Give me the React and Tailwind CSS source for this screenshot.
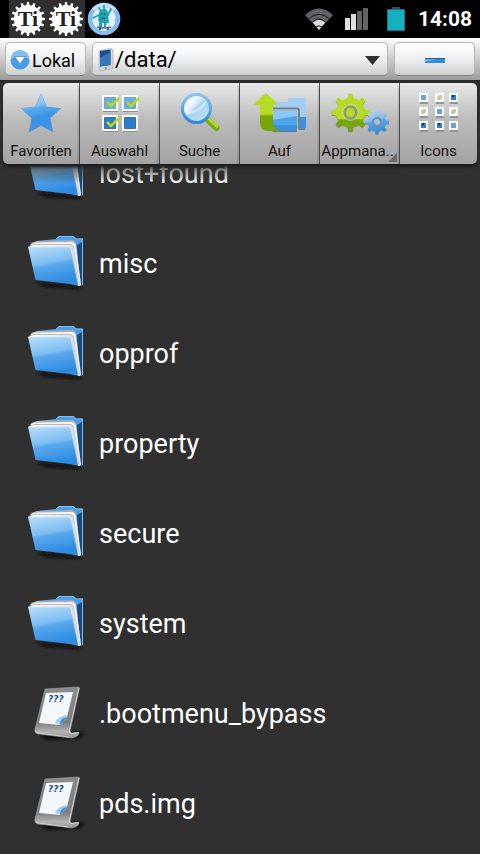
import React from 'react'

const folders = ['lost+found', 'misc', 'opprof', 'property', 'secure', 'system']
const files = ['.bootmenu_bypass', 'pds.img']

// closed outline of a gear, alternating between the root and tip radius
function gearPath(cx, cy, tip, root, teeth) {
  const step = (Math.PI * 2) / teeth
  const points = []
  for (let i = 0; i < teeth; i++) {
    const a = i * step - Math.PI / 2
    const at = (r, k) => `${(cx + r * Math.cos(a + k * step)).toFixed(2)} ${(cy + r * Math.sin(a + k * step)).toFixed(2)}`
    points.push(at(root, -0.4), at(root, -0.26), at(tip, -0.15), at(tip, 0.15), at(root, 0.26), at(root, 0.4))
  }
  return `M${points.join('L')}Z`
}

function Defs() {
  return (
    <svg className="absolute h-0 w-0" aria-hidden="true">
      <defs>
        <linearGradient id="blue" x1="0" y1="0" x2="0.25" y2="1">
          <stop offset="0" stopColor="#b9ddf9" />
          <stop offset="0.48" stopColor="#7dbdf3" />
          <stop offset="0.56" stopColor="#5aa8ec" />
          <stop offset="1" stopColor="#2e8be2" />
        </linearGradient>
        <linearGradient id="page" x1="0" y1="0" x2="1" y2="0">
          <stop offset="0" stopColor="#fff" />
          <stop offset="1" stopColor="#d8d8d8" />
        </linearGradient>
        <linearGradient id="metal" x1="0" y1="0" x2="0" y2="1">
          <stop offset="0" stopColor="#8c8c8c" />
          <stop offset="0.7" stopColor="#7f7f7f" />
          <stop offset="0.88" stopColor="#b4b4b4" />
          <stop offset="1" stopColor="#929292" />
        </linearGradient>
        <linearGradient id="lens" x1="0" y1="0" x2="1" y2="1">
          <stop offset="0" stopColor="#d9edfb" />
          <stop offset="0.35" stopColor="#f2f8fc" />
          <stop offset="0.5" stopColor="#a9d3f6" />
          <stop offset="1" stopColor="#c9e4fa" />
        </linearGradient>
        <linearGradient id="ring" x1="0" y1="0" x2="0" y2="1">
          <stop offset="0" stopColor="#8cc3f3" />
          <stop offset="1" stopColor="#2c86de" />
        </linearGradient>
        <linearGradient id="green" x1="0" y1="0" x2="0" y2="1">
          <stop offset="0.54" stopColor="#b5dc22" />
          <stop offset="0.62" stopColor="#76a50c" />
        </linearGradient>
        <linearGradient id="greenGear" x1="0" y1="0" x2="0" y2="1">
          <stop offset="0.66" stopColor="#b5dc22" />
          <stop offset="0.7" stopColor="#76a50c" />
        </linearGradient>
        <filter id="soft" x="-20%" y="-100%" width="140%" height="300%">
          <feGaussianBlur stdDeviation="1.6" />
        </filter>
      </defs>
    </svg>
  )
}

function TitaniumIcon() {
  return (
    <svg viewBox="0 0 38 38" className="h-[38px] w-[38px] bg-[#303030]">
      <path d={gearPath(19, 19, 17, 14, 16)} fill="#fff" />
      <text x="19" y="26" textAnchor="middle" fontSize="22" fontWeight="700" fontFamily="Liberation Serif, serif" fill="#222">Ti</text>
    </svg>
  )
}

function SkaterIcon() {
  return (
    <svg viewBox="0 0 34 34" className="ml-[2px] h-[34px] w-[34px]">
      <circle cx="17" cy="17" r="14" fill="#e4eef6" stroke="#86bdf0" strokeWidth="4.500" />
      <path d="M6.300 8A14 14 0 0 1 27.700 8" fill="none" stroke="#bfdff9" strokeWidth="4" />
      <path d="M29 16l4.500 1-2.500 4-4-3z" fill="#7fb9ec" />
      <path d="M12 11q1-4 5-4t4 5l1 9h-3v4h-2v-4h-2v4h-3v-6h-1z" fill="#1fa3ae" />
      <path d="M12 13l-6 3M21 13l3-6M12 6l2 3M17 4v3" stroke="#1fa3ae" strokeWidth="1.900" fill="none" strokeLinecap="round" />
      <path d="M14 11h1v2h-1zM17 11h1v2h-1zM14 16h4v1h-4z" fill="#17424c" />
      <path d="M10 25q7 2 14 0" stroke="#5d6470" strokeWidth="1.500" fill="none" />
      <circle cx="13" cy="27" r="1" fill="#333" />
      <circle cx="21" cy="27" r="1" fill="#333" />
    </svg>
  )
}

function StatusBar() {
  return (
    <div className="flex h-[38px] items-center bg-black pr-2 pl-[9px] text-white">
      <TitaniumIcon />
      <TitaniumIcon />
      <SkaterIcon />
      <div className="ml-auto flex items-center">
        <svg viewBox="0 0 30 24" className="h-6 w-[30px]">
          <path d="M1 8Q15-5 29 8L15 23Z" fill="#606265" />
          <path d="M5 11.500Q15 3 25 11.500" fill="none" stroke="#111" strokeWidth="1" />
          <path d="M9 15.500Q15 10 21 15.500L15 23Z" fill="#dcdcdc" />
          <path d="M8.500 15Q15 9 21.500 15" fill="none" stroke="#111" strokeWidth="1" />
          <path d="M12 20Q15 17.500 18 20" fill="none" stroke="#111" strokeWidth="1" />
        </svg>
        <svg viewBox="0 0 24 22" className="ml-[11px] h-[22px] w-6">
          <path d="M0 10h5v12H0zM6 6h5v16H6z" fill="#dedede" />
          <path d="M12 3h5v19h-5zM18 0h5v22h-5z" fill="#626466" />
        </svg>
        <svg viewBox="0 0 20 26" className="ml-[17px] h-[26px] w-5">
          <path d="M6 1h8v3H6z" fill="#3a4a58" />
          <path d="M1.500 3.500h17v21h-17z" fill="#14b0bd" stroke="#2b6d86" />
        </svg>
        <span className="ml-3 text-[21px] leading-6 font-bold">14:08</span>
      </div>
    </div>
  )
}

function AddressBar() {
  const field = 'flex h-[34px] items-center rounded-[5px] border border-[#b4b6b6] border-b-[#808282] bg-linear-to-b from-white via-[#eef0f1] to-[#cfd1d0] pt-[2px]'
  return (
    <div className="flex gap-[6px] border-b-[3px] border-[#2b2b2b] bg-linear-to-b from-white to-[#9c9c9c] px-[5px] py-1 text-black">
      <button type="button" className={`${field} w-[81px] gap-[2px] pl-1 text-[18px]`}>
        <svg viewBox="0 0 20 20" className="h-5 w-5 shrink-0">
          <circle cx="10" cy="10" r="9.500" fill="#4a9be6" />
          <path d="M1 9a9 9 0 0 1 18 0q-9-5-18 0z" fill="#84bdf0" />
          <path d="M4.500 6.500h11L10 14z" fill="#fff" stroke="#2470c0" strokeWidth="0.600" />
        </svg>
        Lokal
      </button>
      <label className={`${field} flex-1 pr-[7px] pl-1`}>
        <svg viewBox="0 0 18 24" className="h-6 w-[18px] shrink-0">
          <path d="M2 2.500L14 .5q2 0 2 2v18L4 23q-2 0-2-2z" fill="#d3d6d9" stroke="#a5a8ab" strokeWidth="0.600" />
          <path d="M3 3l10.500-1.500V17L3 18.500z" fill="#1d4f8c" />
          <path d="M3 10l10.500-6v13L3 18.500z" fill="#3478bd" />
          <circle cx="9" cy="20.300" r="1" fill="#777" />
        </svg>
        <select aria-label="Pfad" className="min-w-0 flex-1 appearance-none bg-transparent text-[22px] leading-7">
          <option>/data/</option>
        </select>
        <svg viewBox="0 0 15 9" className="h-[9px] w-[15px]">
          <path d="M0 0h15L7.500 9z" fill="#303234" />
        </svg>
      </label>
      <button type="button" aria-label="Minimieren" className={`${field} w-[81px] justify-center`}>
        <svg viewBox="0 0 20 5" className="h-[5px] w-5">
          <path d="M0 0h20v5H0z" fill="#318be0" />
          <path d="M0 0h20v1H0z" fill="#1e62a5" />
          <path d="M0 1h12L0 4z" fill="#6db0ee" />
        </svg>
      </button>
    </div>
  )
}

function StarIcon() {
  return (
    <svg viewBox="0 0 40 40" className="h-10 w-10">
      <path d="M20 1l5.500 13 14 1.500-10.500 9.700 3 13.800L20 32.500 8 39l3-13.800L.5 15.500l14-1.500z" fill="#3b95e6" stroke="#5a8fc2" strokeWidth="0.500" />
      <path d="M20 1l5.500 13 14 1.500-9 8Q20 24 10 29.500L11 25.200.5 15.500l14-1.500z" fill="url(#blue)" />
    </svg>
  )
}

function SelectionIcon() {
  const boxes = [[2, 0], [22, 0], [2, 20], [22, 20]]
  return (
    <svg viewBox="0 0 40 40" className="h-10 w-10">
      {boxes.map(([x, y], i) => (
        <g key={i}>
          <path d={`M${x + 1} ${y + 4}h15v15h-15z`} fill="#8b8b8b" />
          <path d={`M${x} ${y + 2}h16v16h-16z`} fill="#fafafa" />
          <path d={`M${x + 2.5} ${y + 4.5}h11v11h-11z`} fill={i < 2 ? '#6aaee9' : '#2a7dcc'} stroke={i < 2 ? '#5590c8' : '#1b4c86'} strokeWidth="0.700" />
          {i < 3 && <path d={`M${x + 5} ${y + 9}l4 4 8-8`} fill="none" stroke="#b5dc12" strokeWidth="2.600" />}
        </g>
      ))}
    </svg>
  )
}

function SearchIcon() {
  return (
    <svg viewBox="0 0 40 40" className="h-10 w-10">
      <path d="M28 27l8.500 8" stroke="#79a80d" strokeWidth="6" strokeLinecap="round" />
      <path d="M29 26l8 7.500" stroke="#b5dc22" strokeWidth="3" strokeLinecap="round" />
      <circle cx="16.500" cy="15.500" r="14" fill="url(#lens)" stroke="url(#ring)" strokeWidth="3" />
      <path d="M5 20Q20 20 26 8" fill="none" stroke="#fff" strokeWidth="2" opacity="0.500" />
    </svg>
  )
}

function UpIcon() {
  return (
    <svg viewBox="0 0 54 40" className="h-10 w-[54px]">
      <path d="M18 37h26v2H20zM46 35h6v2h-6z" fill="#777" />
      <path d="M19 9h16V6q0-1 1-1h15q2 0 2 2v27q0 2-2 2h-4V15H19z" fill="#9fcef7" />
      <path d="M47 24h6v10q0 2-2 2h-4z" fill="#3b93e4" />
      <path d="M19 15.500h25q2 0 2 2V36" fill="none" stroke="#7b7f83" strokeWidth="2" />
      <path d="M19 17h23q2 0 2 2v17q0 2-2 2H19z" fill="#8dc5f5" />
      <path d="M19 27l25-4v13q0 2-2 2H19z" fill="#4fa2ea" />
      <path d="M19 32h25v4q0 2-2 2H19z" fill="#3790e4" />
      <path d="M13 0L26 12h-6v16q0 7 7 10H15Q7 38 7 29V12H0z" fill="url(#green)" />
    </svg>
  )
}

function GearsIcon() {
  return (
    <svg viewBox="0 0 58 42" className="h-[42px] w-[58px]">
      <path d={gearPath(19.5, 20.5, 19, 14.500, 8)} fill="#86907a" />
      <path d={gearPath(19.5, 19.5, 19, 14.500, 8)} fill="url(#greenGear)" />
      <circle cx="19.500" cy="19.500" r="6" fill="#b5dc22" stroke="#909789" strokeWidth="3" />
      <circle cx="19.500" cy="19.500" r="7.800" fill="none" stroke="#d8e8a2" strokeWidth="0.700" />
      <path d={gearPath(46, 30, 12, 9, 8)} fill="#7a8a98" />
      <path d={gearPath(46, 29, 12, 9, 8)} fill="url(#blue)" />
      <circle cx="46" cy="29" r="4" fill="#8fc4f3" stroke="#7d8b96" strokeWidth="2" />
    </svg>
  )
}

function GridIcon() {
  const kinds = ['b', 'y', 'd', 'y', 'b', 'y', 'd', 'd', 'b']
  const xs = [0, 16, 30]
  return (
    <svg viewBox="0 0 40 40" className="h-10 w-10">
      {kinds.map((k, i) => {
        const x = xs[i % 3]
        const y = Math.floor(i / 3) * 14
        return (
          <g key={i}>
            <path d={`M${x + 1} ${y + 2}h8v9h-8z`} fill="#929292" />
            <path d={`M${x} ${y}h9v9h-9z`} fill="#fff" />
            {k === 'b' && <path d={`M${x + 2} ${y + 2}h5v5h-5z`} fill="#5fa5e4" />}
            {k === 'd' && <path d={`M${x + 2} ${y + 2}h5v5h-5z`} fill="#287fc9" />}
            {k === 'd' && <path d={`M${x + 3} ${y + 2}h2v2h-2z`} fill="#17345a" />}
            {k === 'y' && <path d={`M${x + 2} ${y + 4}l2-2h3v3l-2 2h-3z`} fill="#c6c9a0" />}
          </g>
        )
      })}
    </svg>
  )
}

const tools = [
  { label: 'Favoriten', Icon: StarIcon },
  { label: 'Auswahl', Icon: SelectionIcon },
  { label: 'Suche', Icon: SearchIcon },
  { label: 'Auf', Icon: UpIcon },
  { label: 'Appmana...', Icon: GearsIcon, more: true },
  { label: 'Icons', Icon: GridIcon },
]

function Toolbar() {
  return (
    <div className="relative z-10 grid grid-cols-6">
      {tools.map(({ label, Icon, more }) => (
        <button
          key={label}
          type="button"
          className="relative flex h-[81px] flex-col items-center justify-between border-r border-[#686868] bg-linear-to-b from-[#e8e9e9] via-[#bcbcbc] via-45% to-[#a3a2a2] pt-[10px] pb-1 text-[15px] leading-[18px] text-[#111] shadow-[0_3px_3px_#1c1c1c] first:ml-[3px] first:rounded-l-[5px] last:mr-[3px] last:rounded-r-[5px] last:border-r-0"
        >
          <Icon />
          {label}
          {more && (
            <svg viewBox="0 0 9 9" className="absolute right-[2px] bottom-[2px] h-[9px] w-[9px]">
              <path d="M9 0v9H0z" fill="#6a6c6e" />
            </svg>
          )}
        </button>
      ))}
    </div>
  )
}

function FolderIcon() {
  return (
    <svg viewBox="0 0 60 56" className="h-14 w-[60px] shrink-0">
      <path d="M9 46l44 4 1 3-36-2z" fill="#0d0d0d" filter="url(#soft)" />
      <path d="M10 5l19-2 3-3h15l2 2.500h7V49l-4 1L10 40z" fill="#4a9fe8" />
      <path d="M29 3l3-2.500h14l3 2.500h6.500V49" fill="none" stroke="#8cc6f6" strokeWidth="0.800" />
      <path d="M50 9l5-3v43l-3 1z" fill="#164b82" />
      <path d="M4 7l6-2 36-1 3 3 5 42-2 1z" fill="#b0b0b0" />
      <path d="M3 8l7-1.500 36-.5 2.500 2.500L54 49l-2 1z" fill="#f4f4f4" />
      <path d="M2 10l5-2 37 0 2.500 2L53 49z" fill="#bdbdbd" />
      <path d="M2 10.500l5-1.500 37 0 2 2L53 49z" fill="url(#page)" />
      <path d="M1 11h40.500q2 0 2.500 2l7.500 36L8.500 44z" fill="url(#blue)" />
      <path d="M1 11h40.500q2 0 2.500 2l7.500 36" fill="none" stroke="#d3eafc" strokeWidth="0.800" />
    </svg>
  )
}

function UnknownFileIcon() {
  return (
    <svg viewBox="0 0 60 56" className="h-14 w-[60px] shrink-0">
      <path d="M12 48l46-2-4 6-34 2z" fill="#0d0d0d" filter="url(#soft)" />
      <path d="M18 3l33-2 1.500 1L43 45q0 2 2 2l7-.5q0 4-7 5.500L11 48q-4-1-3-5z" fill="url(#metal)" stroke="#a0a0a0" strokeWidth="0.600" />
      <path d="M52 1.500L42.500 44q-.5 3 2 3.500l7-1" fill="none" stroke="#d2d2d2" />
      <path d="M9 45q0 2 3 2l30 4" fill="none" stroke="#d6d6d6" strokeWidth="0.800" />
      <path d="M19 7l27-1-6 25-7 8-21-2z" fill="#f4f8fb" />
      <path d="M28 37q3-7 12-8l-1 4-6 5z" fill="#9dcbf2" />
      <path d="M33 39l7-8q-7 1-7 8z" fill="#3888d3" />
      <text x="21" y="16" fontSize="9" fontWeight="700" fontStyle="italic" fontFamily="DejaVu Sans, sans-serif" fill="#1d4a80">???</text>
    </svg>
  )
}

function Row({ name, Icon }) {
  return (
    <li className="flex h-[90px] items-center gap-3 pl-[27px] text-[27px] leading-8 text-white">
      <Icon />
      {name}
    </li>
  )
}

export default function App() {
  return (
    <div className="min-h-screen bg-[#303030] font-[Roboto,sans-serif]">
      <Defs />
      <StatusBar />
      <AddressBar />
      <Toolbar />
      <div className="relative overflow-hidden">
        {/* the list is scrolled a little way under the toolbar */}
        <ul className="-mt-[35px]">
          {folders.map((name) => <Row key={name} name={name} Icon={FolderIcon} />)}
          {files.map((name) => <Row key={name} name={name} Icon={UnknownFileIcon} />)}
        </ul>
        <div className="pointer-events-none absolute inset-x-0 top-0 h-5 bg-linear-to-b from-[#303030]/80 to-transparent" />
      </div>
    </div>
  )
}
